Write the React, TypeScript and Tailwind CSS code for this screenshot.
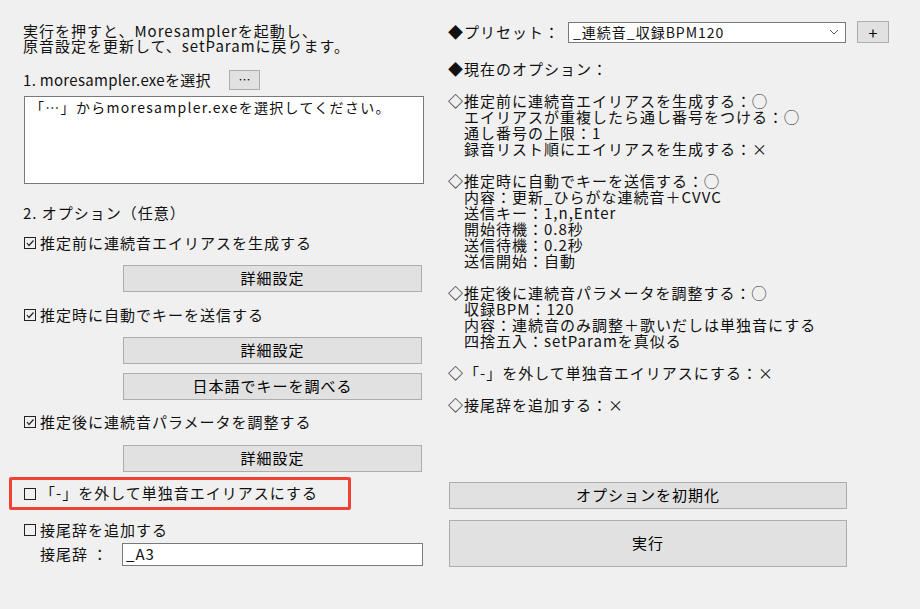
import React from "react";

const font = { fontFamily: '"Noto Sans CJK JP", "Noto Sans", sans-serif' };

function Box({ checked }: { checked: boolean }) {
  return (
    <svg width="14" height="14" viewBox="0 0 14 14" className="mr-[3px] shrink-0">
      <rect x="1.5" y="1.5" width="11" height="11" fill="none" stroke="#222" strokeWidth="1" />
      {checked && <polyline points="4,7 6,9.5 10.5,4.5" fill="none" stroke="#222" strokeWidth="1.2" />}
    </svg>
  );
}

function Check({ checked, label }: { checked: boolean; label: string }) {
  return (
    <div className="flex h-[16px] items-center">
      <Box checked={checked} />
      <span>{label}</span>
    </div>
  );
}

function Btn({ children, className = "" }: { children: React.ReactNode; className?: string }) {
  return (
    <div
      className={
        "flex items-center justify-center border border-[#adadad] bg-[#e1e1e1] text-black " + className
      }
    >
      {children}
    </div>
  );
}

const options = [
  "◇推定前に連続音エイリアスを生成する：◯",
  "　エイリアスが重複したら通し番号をつける：◯",
  "　通し番号の上限：1",
  "　録音リスト順にエイリアスを生成する：×",
  "",
  "◇推定時に自動でキーを送信する：◯",
  "　内容：更新_ひらがな連続音＋CVVC",
  "　送信キー：1,n,Enter",
  "　開始待機：0.8秒",
  "　送信待機：0.2秒",
  "　送信開始：自動",
  "",
  "◇推定後に連続音パラメータを調整する：◯",
  "　収録BPM：120",
  "　内容：連続音のみ調整＋歌いだしは単独音にする",
  "　四捨五入：setParamを真似る",
  "",
  "◇「-」を外して単独音エイリアスにする：×",
  "",
  "◇接尾辞を追加する：×",
].join("\n");

export default function App() {
  return (
    <div
      className="flex h-[609px] w-[920px] overflow-hidden bg-[#f0f0f0] text-[15px] tracking-[1px] text-[#111]"
      style={font}
    >
      {/* left column */}
      <div className="ml-[23px] flex w-[401px] flex-col pt-[23px]">
        <div className="whitespace-pre leading-[15px]">
          {"実行を押すと、Moresamplerを起動し、\n原音設定を更新して、setParamに戻ります。"}
        </div>
        <div className="mt-[17px] flex h-[20px] items-center">
          <span className="w-[206px] whitespace-nowrap tracking-[0.3px]">1. moresampler.exeを選択</span>
          <Btn className="h-[20px] w-[31px] text-[12px] tracking-normal">…</Btn>
        </div>
        <div className="ml-[1px] mt-[6px] h-[88px] w-[400px] border border-[#7a7a7a] bg-white px-[5px] pt-[2px] text-[14px] leading-[16px] tracking-[1.3px]">
          「…」からmoresampler.exeを選択してください。
        </div>
        <div className="mt-[21px] h-[16px] leading-[16px]">2. オプション（任意）</div>
        <div className="mt-[14px]">
          <Check checked label="推定前に連続音エイリアスを生成する" />
        </div>
        <Btn className="ml-[100px] mt-[14px] h-[27px] w-[299px]">詳細設定</Btn>
        <div className="mt-[15px]">
          <Check checked label="推定時に自動でキーを送信する" />
        </div>
        <Btn className="ml-[100px] mt-[14px] h-[27px] w-[299px]">詳細設定</Btn>
        <Btn className="ml-[100px] mt-[9px] h-[27px] w-[299px]">日本語でキーを調べる</Btn>
        <div className="mt-[14px]">
          <Check checked label="推定後に連続音パラメータを調整する" />
        </div>
        <Btn className="ml-[100px] mt-[15px] h-[27px] w-[299px]">詳細設定</Btn>
        <div className="-ml-[14px] mt-[5px] flex h-[33px] w-[342px] items-center rounded-[2px] border-[3px] border-[#ef4136] pl-[11px]">
          <Check checked={false} label="「-」を外して単独音エイリアスにする" />
        </div>
        <div className="mt-[12px]">
          <Check checked={false} label="接尾辞を追加する" />
        </div>
        <div className="mt-[5px] flex h-[23px] items-center">
          <span className="ml-[17px] w-[82px] whitespace-nowrap">接尾辞 ：</span>
          <div className="flex h-[23px] w-[301px] items-center border border-[#7a7a7a] bg-white pl-[3px]">
            _A3
          </div>
        </div>
      </div>

      {/* right column */}
      <div className="ml-[24px] flex w-[442px] flex-col pt-[21px]">
        <div className="flex h-[22px] items-center">
          <span className="w-[120px] whitespace-nowrap">◆プリセット：</span>
          <div className="flex h-[21px] w-[278px] items-center justify-between border border-[#7a7a7a] bg-white pl-[4px] pr-[6px] text-[14px]">
            <span>_連続音_収録BPM120</span>
            <svg width="10" height="6" viewBox="0 0 10 6">
              <polyline points="1,1 5,5 9,1" fill="none" stroke="#555" strokeWidth="1" />
            </svg>
          </div>
          <Btn className="ml-[11px] h-[22px] w-[32px] text-[16px] tracking-normal">+</Btn>
        </div>
        <div className="mt-[18px] h-[16px] leading-[16px]">◆現在のオプション：</div>
        <div className="mt-[16px] h-[320px] whitespace-pre leading-[16px]">{options}</div>
        <Btn className="ml-[1px] mt-[69px] h-[27px] w-[398px]">オプションを初期化</Btn>
        <Btn className="ml-[1px] mt-[11px] h-[47px] w-[398px]">実行</Btn>
      </div>
    </div>
  );
}
